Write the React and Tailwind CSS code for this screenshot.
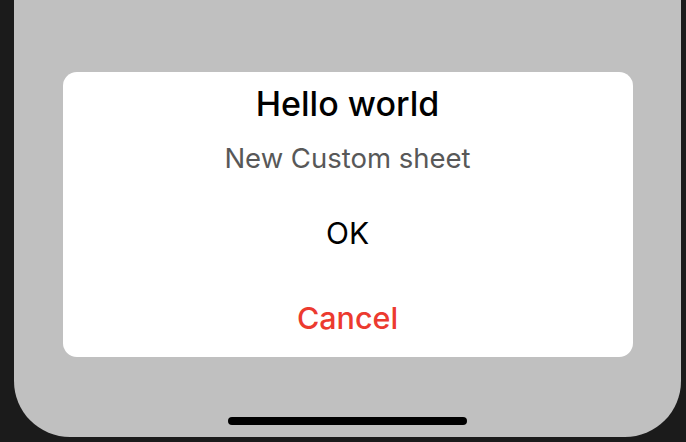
export default function App() {
    return (
        <div className="flex h-[442px] w-[686px] bg-[#1b1b1b] font-['Inter',sans-serif]">
            <div className="ml-[14px] flex h-[437px] w-[667px] flex-col items-center rounded-b-[56px] bg-[#c0c0c0]">
                <div className="mt-[72px] flex h-[285px] w-[570px] flex-col rounded-[14px] bg-white">
                    <div className="flex h-[64px] items-center justify-center text-[34px] font-medium leading-none text-black">
                        Hello world
                    </div>
                    <div className="flex h-[46px] items-center justify-center text-[27.5px] leading-none text-[#585858]">
                        New Custom sheet
                    </div>
                    <button className="mt-[12px] flex h-[78px] items-center justify-center text-[30px] leading-none text-black">
                        OK
                    </button>
                    <button className="mt-[7px] flex h-[78px] items-center justify-center text-[30.5px] font-medium leading-none text-[#ec3a2f]">
                        Cancel
                    </button>
                </div>
                <div className="mt-[60px] h-[8px] w-[239px] rounded-full bg-black" />
            </div>
        </div>
    );
}
